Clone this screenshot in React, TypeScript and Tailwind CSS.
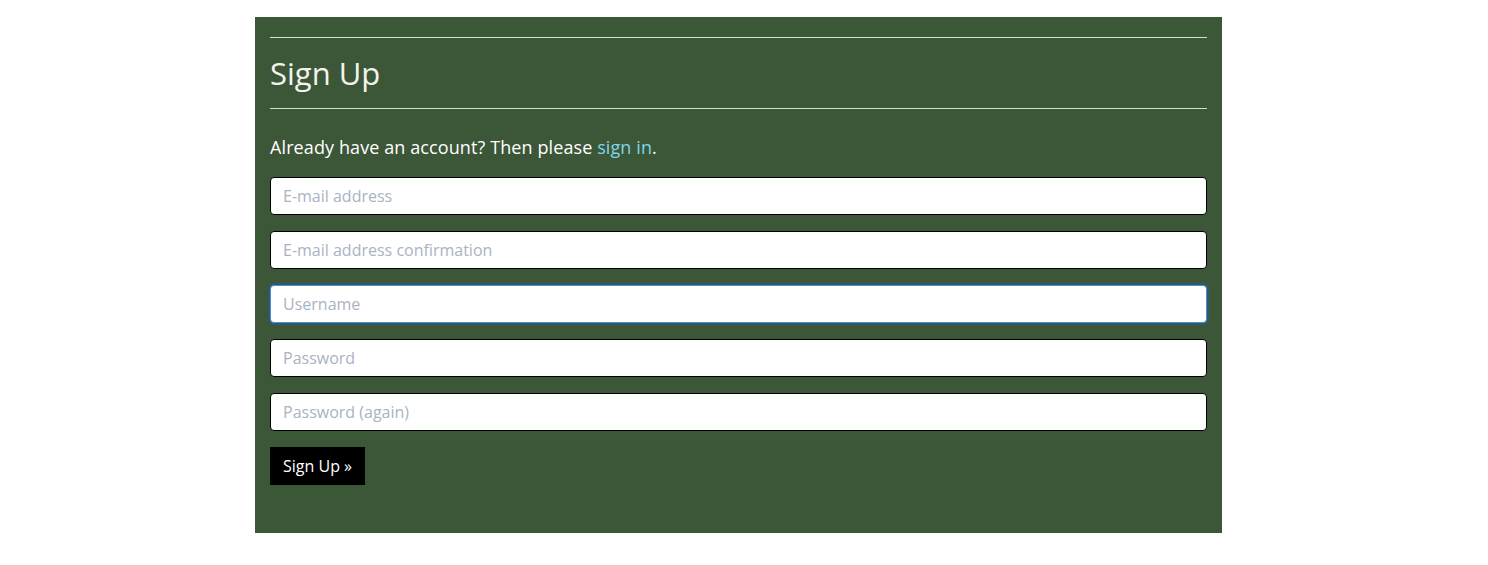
import React from "react";

const inputCls =
  "block w-full h-[38px] rounded-[4px] border border-black bg-white px-[12px] text-[16px] text-[#333] placeholder:text-[#a9b3c1] outline-none";

export default function App() {
  return (
    <div className="min-h-[565px] bg-white" style={{ fontFamily: '"Open Sans", "Noto Sans", sans-serif' }}>
      <div className="pt-[17px] pl-[255px]">
        <div className="w-[967px] h-[516px] bg-[#3c5638] px-[15px] pt-[20px] text-white">
          <div className="h-px bg-[#d8dcd5]" />
          <h1 className="h-[70px] flex items-center text-[31px] font-normal text-[#f3f3ee] pt-[1px]">Sign Up</h1>
          <div className="h-px bg-[#d8dcd5]" />
          <p className="mt-[27px] text-[18px] tracking-[0.1px] leading-[22px] text-white">
            Already have an account? Then please{" "}
            <a href="#" className="text-[#7fd6e6]">sign in</a>.
          </p>
          <form className="mt-[19px] flex flex-col gap-[16px]" onSubmit={(e) => e.preventDefault()}>
            <input className={inputCls} placeholder="E-mail address" />
            <input className={inputCls} placeholder="E-mail address confirmation" />
            <input
              className={inputCls + " !border-[#4a8fd4] shadow-[0_0_0_2px_rgba(40,90,140,0.6)]"}
              placeholder="Username"
              autoFocus
            />
            <input className={inputCls} type="password" placeholder="Password" />
            <input className={inputCls} type="password" placeholder="Password (again)" />
            <div>
              <button type="submit" className="h-[38px] px-[13px] bg-black text-white text-[16px]">
                Sign Up »
              </button>
            </div>
          </form>
        </div>
      </div>
    </div>
  );
}
